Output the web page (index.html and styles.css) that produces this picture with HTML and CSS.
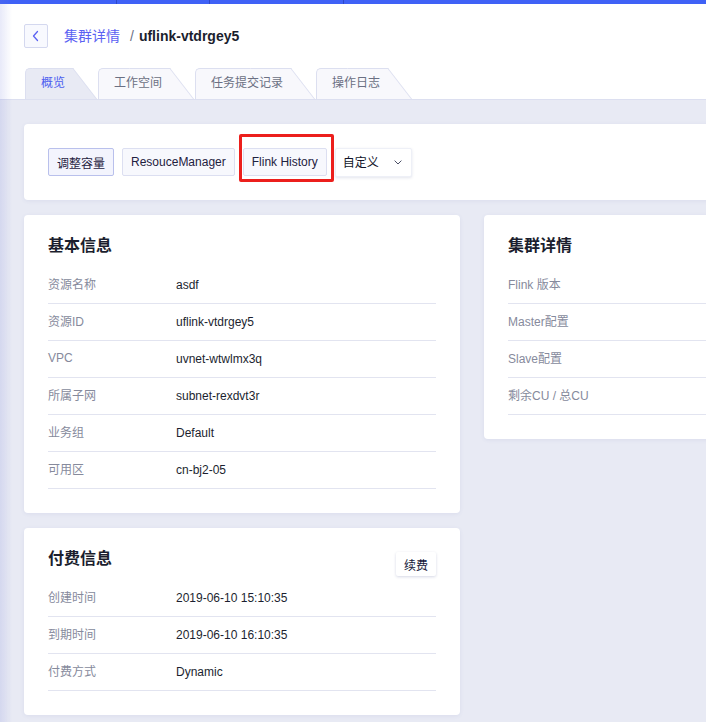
FILE: index.html
```html
<!DOCTYPE html>
<html lang="zh-CN">
<head>
<meta charset="utf-8">
<title>集群详情</title>
<link rel="stylesheet" href="styles.css">
</head>
<body>
<div class="edge-shadow"></div>
<div class="page">
  <div class="topbar">
    <span class="seg seg-a"></span><span class="seg seg-b"></span><span class="seg seg-c"></span><span class="seg seg-d"></span>
  </div>
  <header class="head">
    <div class="crumbs">
      <button class="back" type="button" aria-label="返回">
        <svg width="24" height="24" viewBox="0 0 24 24"><polyline points="13.5,7.5 9.5,12 13.5,16.5" fill="none" stroke="#5b62f2" stroke-width="1.3" stroke-linecap="round" stroke-linejoin="round"/></svg>
      </button>
      <a class="crumb-link">集群详情</a>
      <span class="crumb-sep">/</span>
      <span class="crumb-cur">uflink-vtdrgey5</span>
    </div>
    <nav class="tabs">
      <div class="tab active"><span>概览</span></div>
      <div class="tab"><span>工作空间</span></div>
      <div class="tab"><span>任务提交记录</span></div>
      <div class="tab"><span>操作日志</span></div>
    </nav>
  </header>
  <main class="content">
    <section class="card actions">
      <button class="btn btn-strong" type="button">调整容量</button>
      <button class="btn" type="button">ResouceManager</button>
      <span class="mark"><button class="btn" type="button">Flink History</button></span>
      <button class="dropdown" type="button"><span>自定义</span>
        <svg width="8" height="5" viewBox="0 0 8 5"><polyline points="0.6,0.6 4,4 7.4,0.6" fill="none" stroke="#4a4f66" stroke-width="1"/></svg>
      </button>
    </section>
    <div class="grid">
      <div class="col">
        <section class="card">
          <div class="card-head"><h2 class="card-title">基本信息</h2></div>
          <div class="row"><span class="k">资源名称</span><span class="v">asdf</span></div>
          <div class="row"><span class="k">资源ID</span><span class="v">uflink-vtdrgey5</span></div>
          <div class="row"><span class="k">VPC</span><span class="v">uvnet-wtwlmx3q</span></div>
          <div class="row"><span class="k">所属子网</span><span class="v">subnet-rexdvt3r</span></div>
          <div class="row"><span class="k">业务组</span><span class="v">Default</span></div>
          <div class="row"><span class="k">可用区</span><span class="v">cn-bj2-05</span></div>
        </section>
        <section class="card">
          <div class="card-head"><h2 class="card-title">付费信息</h2><button class="renew" type="button">续费</button></div>
          <div class="row"><span class="k">创建时间</span><span class="v">2019-06-10 15:10:35</span></div>
          <div class="row"><span class="k">到期时间</span><span class="v">2019-06-10 16:10:35</span></div>
          <div class="row"><span class="k">付费方式</span><span class="v">Dynamic</span></div>
        </section>
      </div>
      <div class="col">
        <section class="card">
          <div class="card-head"><h2 class="card-title">集群详情</h2></div>
          <div class="row"><span class="k">Flink 版本</span><span class="v"></span></div>
          <div class="row"><span class="k">Master配置</span><span class="v"></span></div>
          <div class="row"><span class="k">Slave配置</span><span class="v"></span></div>
          <div class="row"><span class="k">剩余CU / 总CU</span><span class="v"></span></div>
        </section>
      </div>
    </div>
  </main>
</div>
</body>
</html>
```
FILE: styles.css
```css
html, body {
  margin: 0;
  padding: 0;
  overflow: hidden;
  background: #e8eaf4;
}
body {
  font-family: "Liberation Sans", Arial, "Noto Sans CJK SC", sans-serif;
  color: #1c1f30;
}
.page {
  width: 944px;
}
.edge-shadow {
  position: fixed;
  left: 0;
  top: 0;
  bottom: 0;
  width: 12px;
  background: linear-gradient(to right, rgba(110, 120, 215, 0.16), rgba(110, 120, 215, 0));
  pointer-events: none;
  z-index: 10;
}
.topbar {
  display: flex;
  height: 4px;
  background: #3f61f6;
}
.seg {
  height: 4px;
  border-right: 1px solid #2e48c8;
}
.seg-a { width: 116px; }
.seg-b { width: 92px; }
.seg-c { width: 133px; }
.seg-d { flex: 1; border-right: none; }

.head {
  background: #fff;
  padding-top: 20px;
}
.crumbs {
  display: flex;
  align-items: center;
  height: 24px;
  padding-left: 24px;
  font-size: 14px;
}
.back {
  width: 24px;
  height: 24px;
  padding: 0;
  margin: 0 16px 0 0;
  border: 1px solid #d4d8ef;
  border-radius: 2px;
  background: #f8f9fe;
  display: flex;
  align-items: center;
  justify-content: center;
  box-sizing: border-box;
}
.back svg { display: block; flex: none; }
.crumb-link {
  color: #5b62f2;
  margin-top: -2px;
}
.crumb-sep {
  color: #6d7186;
  margin: 0 5px 0 10px;
}
.crumb-cur {
  font-weight: bold;
  color: #1b1e2e;
}

.tabs {
  display: flex;
  gap: 1px;
  margin-top: 20px;
  padding-left: 25px;
  height: 31px;
  border-bottom: 1px solid #dcdff0;
}
.tab {
  position: relative;
  height: 31px;
  padding: 0 32px 0 16px;
  font-size: 12px;
  line-height: 31px;
  color: #6b7083;
}
.tab span {
  position: relative;
  z-index: 1;
}
.tab::before {
  content: "";
  position: absolute;
  left: 0;
  top: 0;
  bottom: 0;
  right: 24px;
  background: #f8f8fc;
  border-left: 1px solid #dcdff0;
  border-top: 1px solid #dcdff0;
  border-top-left-radius: 5px;
}
.tab::after {
  content: "";
  position: absolute;
  right: 0;
  top: 0;
  bottom: 0;
  width: 40px;
  background: #f8f8fc;
  border-top: 1px solid #dcdff0;
  border-right: 1px solid #dcdff0;
  transform-origin: right bottom;
  transform: skewX(37.7deg);
}
.tab.active { color: #4c5ef0; }
.tab.active::before,
.tab.active::after {
  background: #e8eaf4;
}

.content {
  padding: 24px;
  display: flex;
  flex-direction: column;
  gap: 15px;
}
.card {
  background: #fff;
  border-radius: 4px;
  box-shadow: 0 1px 4px rgba(70, 80, 150, 0.08);
  padding: 24px;
}
.actions {
  display: flex;
  align-items: center;
  gap: 8px;
  height: 28px;
}
.btn {
  height: 28px;
  padding: 0 8px;
  border: 1px solid #dcdff1;
  border-radius: 2px;
  background: #f7f8fd;
  font-family: "Liberation Sans", Arial, "Noto Sans CJK SC", sans-serif;
  font-size: 12px;
  color: #1e2140;
  margin: 0;
}
.btn-strong {
  border-color: #b9c0ec;
  background: #f3f4fd;
}
.mark {
  position: relative;
  display: flex;
}
.mark::after {
  content: "";
  position: absolute;
  left: -4px;
  top: -14px;
  right: -7px;
  bottom: -6px;
  border: 3px solid #ec1f1c;
  border-radius: 2px;
  pointer-events: none;
}
.dropdown {
  height: 29px;
  margin: 0;
  padding: 0 9px 0 7px;
  display: flex;
  align-items: center;
  border: 1px solid #eef0f7;
  border-radius: 2px;
  background: #fff;
  box-shadow: 0 1px 3px rgba(60, 70, 130, 0.14);
  font-family: "Liberation Sans", Arial, "Noto Sans CJK SC", sans-serif;
  font-size: 12px;
  color: #12152a;
}
.dropdown span { margin-top: -2px; }
.dropdown svg {
  display: block;
  margin-left: 15px;
}

.grid {
  display: grid;
  grid-template-columns: 436px 436px;
  gap: 24px;
  align-items: start;
}
.col {
  display: flex;
  flex-direction: column;
  gap: 15px;
}
.card-head {
  display: flex;
  justify-content: space-between;
  align-items: flex-start;
  height: 28px;
}
.card-title {
  margin: -1px 0 0;
  font-size: 16px;
  line-height: 16px;
  font-weight: bold;
  color: #1b1e2e;
}
.renew {
  width: 40px;
  height: 24px;
  padding: 0;
  margin: 0;
  border: none;
  border-radius: 2px;
  background: #fff;
  box-shadow: 0 1px 3px rgba(50, 60, 130, 0.2);
  font-family: "Liberation Sans", Arial, "Noto Sans CJK SC", sans-serif;
  font-size: 12px;
  color: #14173a;
}
.row {
  display: flex;
  align-items: center;
  height: 36px;
  border-bottom: 1px solid #e2e4f0;
  font-size: 12px;
}
.k {
  width: 128px;
  flex: none;
  margin-top: -3px;
  color: #868a9c;
}
.v {
  color: #1c1f30;
}
```
